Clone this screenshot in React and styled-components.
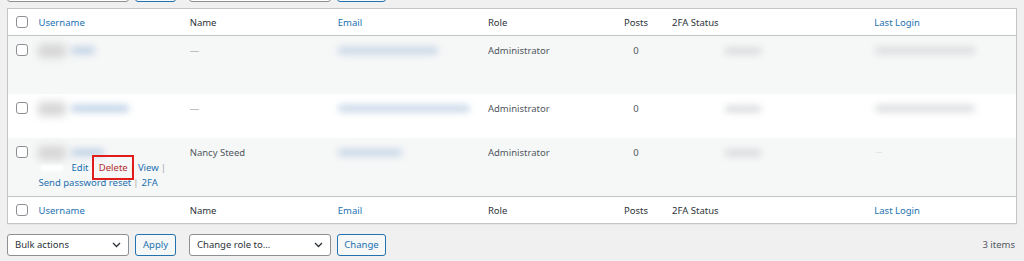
import React from "react";
import styled, { createGlobalStyle } from "styled-components";

const GlobalStyle = createGlobalStyle`
  html, body { margin: 0; padding: 0; }
  body {
    background: #f0f0f1;
    font-family: "Noto Sans", "Open Sans", Arial, sans-serif;
    font-size: 9.5px;
    color: #50575e;
    overflow: hidden;
  }
`;

const Page = styled.div`
  margin-top: -21px;
  padding: 0 7px;
`;

const Tablenav = styled.div`
  display: flex;
  align-items: center;
  height: 23px;
  margin: ${(p) => (p.$bottom ? "9px 0 0" : "0 0 6px")};
`;

const Group = styled.div`
  display: flex;
  align-items: center;
  gap: 6px;
  margin-right: 13px;
`;

const Select = styled.div`
  box-sizing: border-box;
  width: ${(p) => p.$w}px;
  height: 22px;
  background: #fff;
  border: 1px solid #8c8f94;
  border-radius: 3px;
  display: flex;
  align-items: center;
  justify-content: space-between;
  padding: 0 7px 0 7px;
  color: #2c3338;
  font-size: 9.5px;
`;

const Button = styled.div`
  box-sizing: border-box;
  height: 22px;
  min-width: ${(p) => p.$w}px;
  padding: 0 6px;
  display: flex;
  align-items: center;
  justify-content: center;
  background: #f6f7f7;
  border: 1px solid #2271b1;
  border-radius: 3px;
  color: #2271b1;
`;

const Count = styled.div`
  margin-left: auto;
  margin-right: 2px;
  color: #50575e;
`;

const Table = styled.table`
  width: 100%;
  border-collapse: collapse;
  table-layout: fixed;
  background: #fff;
  border: 1px solid #c3c4c7;
  box-shadow: 0 1px 1px rgba(0, 0, 0, 0.04);
`;

const Th = styled.th`
  height: 26px;
  padding: 0 7px;
  text-align: ${(p) => (p.$center ? "center" : "left")};
  font-weight: 400;
  color: ${(p) => (p.$link ? "#2271b1" : "#2c3338")};
  line-height: 15px;
  vertical-align: middle;
  white-space: nowrap;
`;

const CbTh = styled.th`
  padding: 0 0 0 8px;
  height: 26px;
  vertical-align: middle;
  text-align: left;
`;

const HeadRow = styled.tr`
  border-bottom: 1px solid #c3c4c7;
`;

const FootRow = styled.tr`
  border-top: 1px solid #c3c4c7;
`;

const Row = styled.tr`
  background: ${(p) => (p.$alt ? "#f6f7f7" : "#fff")};
`;

const Td = styled.td`
  padding: 7px 7px ${(p) => (p.$pb ? p.$pb : 6)}px;
  vertical-align: top;
  line-height: 15px;
  text-align: ${(p) => (p.$center ? "center" : "left")};
  color: #50575e;
  white-space: nowrap;
  overflow: visible;
`;

const CbTd = styled.td`
  padding: 8px 0 0 8px;
  vertical-align: top;
`;

const Checkbox = styled.span`
  display: block;
  box-sizing: border-box;
  width: 12px;
  height: 12px;
  border: 1px solid #8c8f94;
  border-radius: 3px;
  background: #fff;
`;

const Blur = styled.span`
  display: inline-block;
  vertical-align: middle;
  width: ${(p) => p.$w}px;
  height: ${(p) => p.$h || 7}px;
  margin-left: ${(p) => p.$ml || 0}px;
  margin-right: ${(p) => p.$mr || 0}px;
  background: ${(p) => p.$c};
  border-radius: 4px;
  filter: blur(${(p) => p.$b || 3.5}px);
`;

const Line = styled.div`
  height: 15px;
  display: flex;
  align-items: center;
`;

const Actions = styled.div`
  visibility: ${(p) => (p.$show ? "visible" : "hidden")};
  color: #2271b1;
`;

const Sep = styled.span`
  color: #a7aaad;
  margin: 0 3px 0 2px;
`;

const ActionLink = styled.span`
  color: ${(p) => (p.$danger ? "#b32d2e" : "#2271b1")};
`;

const Marked = styled.span`
  position: relative;
  &::after {
    content: "";
    position: absolute;
    left: -7px;
    right: -6px;
    top: -5px;
    bottom: -5px;
    border: 2px solid #e21b1b;
  }
`;

const Dash = styled.span`
  color: #8c8f94;
`;

const Count0 = styled.span`
  color: #50575e;
`;

const Chevron = () => (
  <svg width="9" height="6" viewBox="0 0 9 6">
    <path d="M1 1l3.5 3.5L8 1" fill="none" stroke="#2c3338" strokeWidth="1.3" />
  </svg>
);

const Nav = ({ bottom }) => (
  <Tablenav $bottom={bottom}>
    <Group>
      <Select $w={122}>
        <span>{bottom ? "Bulk actions" : ""}</span>
        <Chevron />
      </Select>
      <Button $w={41}>{bottom ? "Apply" : ""}</Button>
    </Group>
    <Group>
      <Select $w={142}>
        <span>{bottom ? "Change role to…" : ""}</span>
        <Chevron />
      </Select>
      <Button $w={49}>{bottom ? "Change" : ""}</Button>
    </Group>
    {bottom && <Count>3 items</Count>}
  </Tablenav>
);

const Cols = () => (
  <colgroup>
    <col style={{ width: 24 }} />
    <col style={{ width: 151 }} />
    <col style={{ width: 148 }} />
    <col style={{ width: 150 }} />
    <col style={{ width: 126 }} />
    <col style={{ width: 58 }} />
    <col style={{ width: 202 }} />
    <col style={{ width: 149 }} />
  </colgroup>
);

const HeaderCells = () => (
  <>
    <CbTh>
      <Checkbox />
    </CbTh>
    <Th $link>Username</Th>
    <Th>Name</Th>
    <Th $link>Email</Th>
    <Th>Role</Th>
    <Th $center>Posts</Th>
    <Th>2FA Status</Th>
    <Th $link>Last Login</Th>
  </>
);

const users = [
  { alt: true, link: 24, email: 100, name: null, last: 100, show: false, lines: 2 },
  { alt: false, link: 58, email: 132, name: null, last: 100, show: false, lines: 1 },
  { alt: true, link: 33, email: 64, name: "Nancy Steed", last: 0, show: true, lines: 2 },
];

const UserRow = ({ u }) => (
  <Row $alt={u.alt}>
    <CbTd>
      <Checkbox />
    </CbTd>
    <Td $pb={u.lines === 1 ? 7 : 6}>
      <Line>
        <Blur $w={28} $h={14} $c="#d6d6d6" $ml={-1} $mr={5} $b={4} />
        <Blur $w={u.link} $h={7} $c="#bdd0e4" />
      </Line>
      <Actions $show={u.show}>
        <Line>
          <Blur $w={24} $h={6} $c="#ffffff" $ml={1} $mr={8} $b={1.5} />
          <ActionLink>Edit</ActionLink>
          <Sep>|</Sep>
          <Marked>
            <ActionLink $danger>Delete</ActionLink>
          </Marked>
          <Sep>|</Sep>
          <ActionLink>View</ActionLink>
          <Sep>|</Sep>
        </Line>
        {u.lines === 2 && (
          <Line>
            <ActionLink>Send password reset</ActionLink>
            <Sep>|</Sep>
            <ActionLink>2FA</ActionLink>
          </Line>
        )}
      </Actions>
    </Td>
    <Td>{u.name ? u.name : <Dash>—</Dash>}</Td>
    <Td>
      <Line>
        <Blur $w={u.email} $h={7} $c="#c6d6e7" />
      </Line>
    </Td>
    <Td>Administrator</Td>
    <Td $center>
      <Count0>0</Count0>
    </Td>
    <Td>
      <Line>
        <Blur $w={36} $h={6} $c="#d4d6d8" $ml={53} />
      </Line>
    </Td>
    <Td>
      <Line>
        {u.last ? (
          <Blur $w={u.last} $h={7} $c="#dadcde" $ml={1} />
        ) : (
          <Blur $w={6} $h={1} $c="#e2e4e6" $ml={2} $b={0.5} />
        )}
      </Line>
    </Td>
  </Row>
);

export default function App() {
  return (
    <>
      <GlobalStyle />
      <Page>
        <Nav />
        <Table>
          <Cols />
          <thead>
            <HeadRow>
              <HeaderCells />
            </HeadRow>
          </thead>
          <tbody>
            {users.map((u, i) => (
              <UserRow key={i} u={u} />
            ))}
          </tbody>
          <tfoot>
            <FootRow>
              <HeaderCells />
            </FootRow>
          </tfoot>
        </Table>
        <Nav bottom />
      </Page>
    </>
  );
}
